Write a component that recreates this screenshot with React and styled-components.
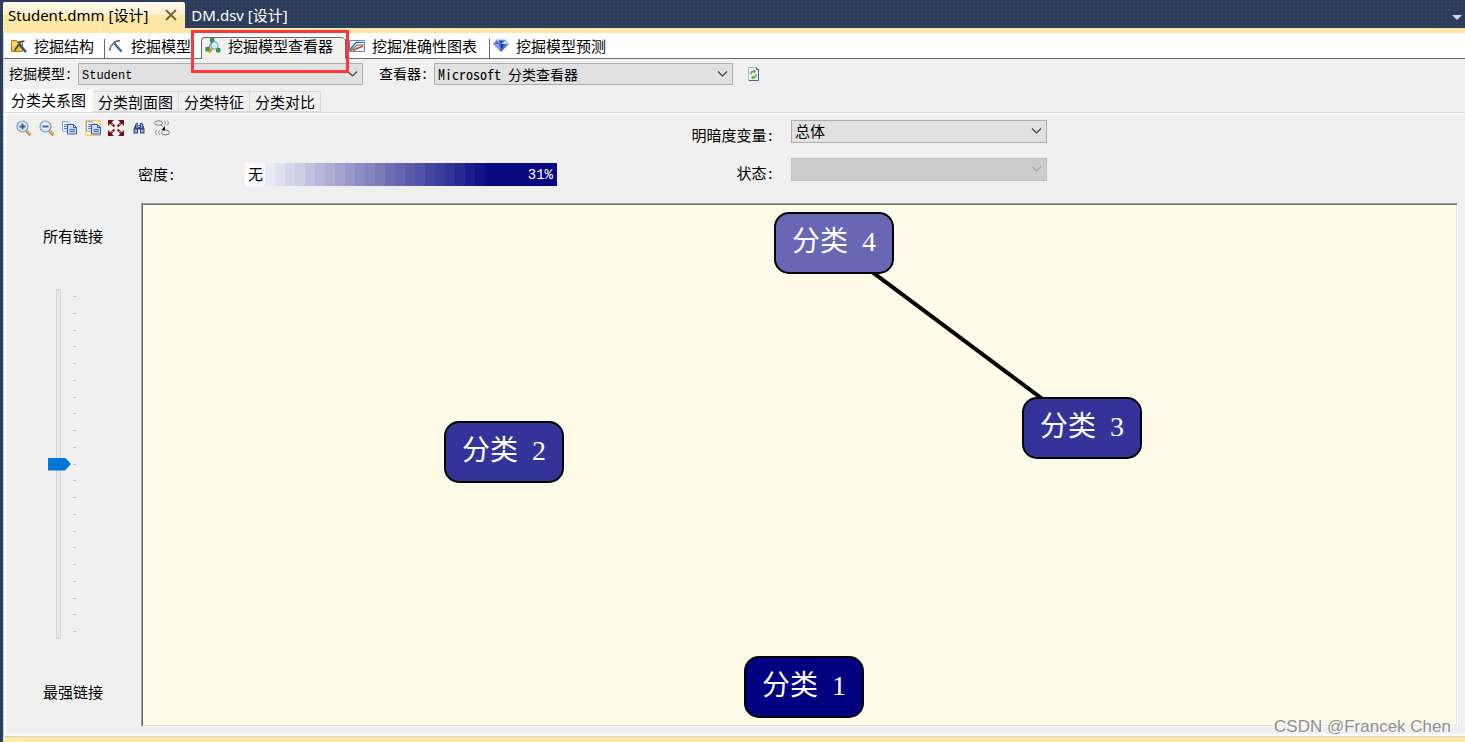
import React, { useState } from "react";
import styled, { createGlobalStyle, css } from "styled-components";

const UI = `"Noto Sans", "Noto Sans CJK SC", sans-serif`;
const SONG = `"Noto Sans Mono CJK SC", "Noto Sans CJK SC", sans-serif`;
const MONO = `"Liberation Mono", monospace`;

const GlobalStyle = createGlobalStyle`
  *, *::before, *::after { box-sizing: border-box; }
  body { margin: 0; background: #f0f0f0; color: #000; font: 300 15px/20px ${SONG}; }
  button, select, input { font: inherit; color: inherit; }
  svg { display: block; flex: none; }
`;

const Page = styled.div`
  position: relative;
  min-height: 100vh;
  display: flex;
  flex-direction: column;
  padding-left: 3px;
  background-color: #2b3c5a;
  background-image: radial-gradient(#32445f 1px, transparent 1px);
  background-size: 4px 4px;
`;

const DocumentBar = styled.div`
  display: flex;
  align-items: flex-end;
  height: 28px;
  padding-top: 2px;
  font: 400 15px/26px ${UI};
`;

const DocumentTab = styled.div`
  display: flex;
  align-items: center;
  height: 26px;
  padding: 0 6px;
  color: ${(p) => (p.$active ? "#000" : "#fff")};
  ${(p) =>
    p.$active &&
    css`
      padding: 0 8px 0 5px;
      border-radius: 2px 2px 0 0;
      background: linear-gradient(#fffcf3, #fff0c9 50%, #ffe8a6 52%, #ffe8a6);
    `}
`;

const PlainButton = styled.button`
  display: flex;
  align-items: center;
  justify-content: center;
  padding: 0;
  border: 0;
  background: none;
`;

const TabTitle = styled(PlainButton)`
  line-height: 26px;
  white-space: pre;
`;

const CloseButton = styled(PlainButton)`
  margin-left: 17px;
`;

const ListButton = styled(PlainButton)`
  width: 16px;
  height: 22px;
  margin-left: auto;
`;

const Designer = styled.main`
  flex: 1;
  display: flex;
  flex-direction: column;
  border-top: 5px solid #ffe8a6;
  border-bottom: 5px solid #ffe8a6;
  background: #f0f0f0;
`;

const ViewTabs = styled.nav`
  display: flex;
  align-items: flex-end;
  height: 26px;
  padding-left: 3px;
  border-left: 1px solid #ccd2de;
  border-bottom: 1px solid #696969;
  background: #fff;
`;

const ViewTab = styled.button`
  position: relative;
  display: flex;
  align-items: center;
  gap: 7px;
  height: 19px;
  padding: 0 ${(p) => (p.$wide ? 12 : 10)}px 6px 3px;
  border: 0;
  border-left: 1px solid ${(p) => (p.$first ? "transparent" : "#696969")};
  background: none;
  white-space: nowrap;
  ${(p) =>
    p.$active &&
    css`
      height: 22px;
      margin-bottom: -1px;
      border-top: 1px solid #696969;
      border-radius: 4px 4px 0 0;
      background: #f0f0f0;
    `}
`;

const Highlight = styled.span`
  position: absolute;
  z-index: 2;
  inset: -8px -4px -14px -11px;
  border: 3px solid #fb3838;
  pointer-events: none;
`;

const Label = styled.label`
  white-space: nowrap;
`;

const PickerRow = styled.div`
  display: flex;
  align-items: center;
  gap: 6px;
  height: 30px;
  padding-left: 5px;
  border-left: 1px solid #ccd2de;
  font-size: 14px;

  ${Label} { padding-bottom: 2px; }
  ${Label} + span + ${Label} { margin-left: 10px; }
`;

const SelectBox = styled.span`
  position: relative;
  display: flex;
  width: ${(p) => p.$width}px;
  height: ${(p) => p.$height || 22}px;

  svg {
    position: absolute;
    right: 5px;
    top: 7px;
    pointer-events: none;
  }
`;

const Select = styled.select`
  appearance: none;
  width: 100%;
  padding: 0 20px 2px 3px;
  border: 1px solid #adadad;
  border-radius: 0;
  background: #e1e1e1;
  ${(p) => p.$latin && css`font: 400 12px/20px ${MONO}; padding: 2px 20px 0 3px;`}

  &:disabled {
    border-color: #bfbfbf;
    background: #ccc;
    opacity: 1;
  }
`;

const RefreshButton = styled(PlainButton)`
  width: 22px;
  height: 22px;
  margin-left: 4px;
`;

const PageTabs = styled.nav`
  display: flex;
  align-items: flex-end;
  height: 23px;
  border-left: 1px solid #ccd2de;
`;

const PageTab = styled.button`
  height: 21px;
  padding: 0 5px;
  border: 1px solid #d9d9d9;
  border-left: 0;
  background: #f0f0f0;
  line-height: 19px;
  white-space: nowrap;
  ${(p) =>
    p.$active &&
    css`
      height: 23px;
      padding: 0 6px 4px 7px;
      border-color: #fff;
      background: #fff;
    `}
`;

const ViewerPage = styled.section`
  flex: 1;
  display: flex;
  flex-direction: column;
  border: 1px solid #ccd2de;
  border-right: 0;
  border-top-color: #d9d9d9;
  box-shadow: inset 3px 0 #fff, inset 0 1px #fff, inset 0 -2px #fff;
  padding: 1px 7px 9px 3px;
`;

const Controls = styled.div`
  display: flex;
  height: 89px;
`;

const ControlsLeft = styled.div`
  width: 684px;
  padding: 3px 0 0 5px;
`;

const Toolbar = styled.div`
  display: flex;
`;

const ToolButton = styled(PlainButton)`
  width: 23px;
  height: 22px;
`;

const DensityRow = styled.div`
  display: flex;
  align-items: center;
  margin-top: 24px;
  padding-left: 126px;
`;

const DensityLabel = styled.span`
  width: 107px;
  padding-bottom: 2px;
`;

const steps = Array.from({ length: 25 }, (_, i) => {
  const c = 255 - Math.round(i * 10.25);
  const b = 255 - Math.round(i * 5.2);
  const end = i === 24 ? "100%" : `${(i + 1) * 10}px`;
  return `rgb(${c},${c},${b}) ${i * 10}px ${end}`;
}).join(", ");

const DensityScale = styled.div`
  display: flex;
  align-items: center;
  justify-content: space-between;
  width: 312px;
  height: 23px;
  padding: 0 4px 2px 3px;
  background: linear-gradient(90deg, ${steps});
`;

const DensityMax = styled.span`
  padding-top: 2px;
  color: #fff;
  font: 400 14px/20px ${MONO};
`;

const ShadingForm = styled.form`
  display: grid;
  grid-template-columns: 83px 256px;
  grid-template-rows: 23px 23px;
  gap: 15px 17px;
  align-items: center;
  align-content: start;
  padding-top: 6px;

  label { padding-top: 7px; text-align: right; }
`;

const Body = styled.div`
  flex: 1;
  display: flex;
  min-height: 520px;
`;

const LinkPanel = styled.div`
  display: flex;
  flex-direction: column;
  gap: 43px;
  width: 134px;
  padding: 23px 0 25px 36px;
`;

const SliderRow = styled.div`
  flex: 1;
  display: flex;
  align-items: stretch;
  gap: 2px;
  padding-left: 5px;
`;

const LinkSlider = styled.input`
  appearance: none;
  writing-mode: vertical-lr;
  width: 23px;
  margin: 0;
  background: linear-gradient(#d6d6d6, #d6d6d6) 8px 0 / 1px 100% no-repeat,
    linear-gradient(#d6d6d6, #d6d6d6) 12px 0 / 1px 100% no-repeat,
    linear-gradient(#d6d6d6, #d6d6d6) 8px 0 / 5px 1px no-repeat,
    linear-gradient(#d6d6d6, #d6d6d6) 8px 100% / 5px 1px no-repeat,
    linear-gradient(#e7eaea, #e7eaea) 8px 0 / 5px 100% no-repeat;

  &::-webkit-slider-thumb {
    appearance: none;
    width: 23px;
    height: 13px;
    background: #0078d7;
    clip-path: polygon(0 0, 17px 0, 100% 50%, 17px 100%, 0 100%);
  }
`;

const Ticks = styled.div`
  display: flex;
  flex-direction: column;
  justify-content: space-between;
  padding: 7px 0;
`;

const Tick = styled.span`
  width: 3px;
  height: 1px;
  background: #c4c4c4;

  &:first-child, &:last-child { width: 4px; }
`;

const Canvas = styled.div`
  position: relative;
  flex: 1;
  overflow: hidden;
  border: 1px solid;
  border-color: #a0a0a0 #fff #fff #a0a0a0;
  background: #fffbe9;
  box-shadow: inset 1px 1px #696969, inset -1px -1px #e3e3e3;
`;

const Links = styled.svg`
  position: absolute;
  inset: 0;
  width: 100%;
  height: 100%;
`;

const Node = styled.button`
  position: absolute;
  left: ${(p) => p.$x}px;
  top: ${(p) => p.$y}px;
  width: 120px;
  height: 62px;
  padding: 0 0 6px;
  border: 2px solid #000;
  border-radius: 15px;
  background: ${(p) => p.$fill};
  color: #fff;
  font-size: 28px;
  line-height: 40px;
  white-space: nowrap;
`;

const NodeNumber = styled.span`
  font-family: "Liberation Serif", serif;
`;

const Watermark = styled.span`
  position: absolute;
  right: 14px;
  bottom: 5px;
  color: #8f8f8f;
  font: 400 17px/20px "Liberation Sans", sans-serif;
  text-shadow: 1px 1px #fff;
`;

const Icon = ({ children, size = 16 }) => (
  <svg width={size} height={size} viewBox="0 0 16 16" fill="none" aria-hidden="true">
    {children}
  </svg>
);

const StructureIcon = () => (
  <Icon>
    <path d="M.5 2.500h5l1 1.500h5v9.500H.5z" fill="#f3bf3f" stroke="#b57d16" />
    <path d="M1 5h10M1 7h4" stroke="#ffe79a" />
    <path d="M8 6 15 14" stroke="#24508f" strokeWidth="2.400" />
    <path d="M3.500 12.500 9 5" stroke="#3f4954" strokeWidth="1.700" />
    <path d="M6.500 4.500 13.500 3" stroke="#3f4954" strokeWidth="1.700" />
  </Icon>
);

const ModelIcon = () => (
  <Icon>
    <path d="M6.500 5.500 13.500 13.500" stroke="#24508f" strokeWidth="2.200" />
    <path d="M7 5.500 13 12.500" stroke="#6f9bd8" strokeWidth=".8" />
    <path d="M1.500 12.500C2 9.500 4 6.500 6 4.500L8 3.500 12 2.500" stroke="#4e5a68" strokeWidth="1.700" />
    <path d="M2.500 10.500C3 8 5 6 7 4.500" stroke="#c5cdd6" strokeWidth=".6" />
  </Icon>
);

const ViewerIcon = () => (
  <Icon>
    <path d="M7 3 3 11M8 3l5 9" stroke="#777" />
    <path d="M5.500 .5h3.500v3.500h-3.500zM.8 9.500h3.700V13H.8zM11.500 10.500h3.500V14h-3.500z" fill="#35a843" stroke="#16752a" strokeWidth=".7" />
    <circle cx="9.500" cy="7.500" r="3.700" fill="#c9ecfb" stroke="#6d97b8" />
    <path d="M8 6.500 9.500 5.500" stroke="#fff" strokeWidth="1.300" />
    <path d="M7 10.500 4 14.500" stroke="#d79330" strokeWidth="2.400" />
  </Icon>
);

const ChartIcon = () => (
  <Icon>
    <path d="M.5 2.500h15v11H.5z" fill="#eef4fc" stroke="#6d84ad" />
    <path d="M1 11.500 7 4.500h7.500" stroke="#2f59ae" strokeWidth="1.200" />
    <path d="m1.500 13 6.500-6h6.500" stroke="#2c9a4c" strokeWidth="1.200" />
    <path d="m4 12.500 4-2 6-2.500" stroke="#d63838" strokeWidth="1.400" />
  </Icon>
);

const DiamondIcon = () => (
  <Icon>
    <path d="M3.500 2h9L15.500 6 8 14 .5 6z" fill="#4b6fd0" stroke="#9faedd" />
    <path d="M3.500 2.500 8 6 5.500 2.500zM8 6l4.500-3.500L15 6z" fill="#c5d8ff" />
    <path d="M1 6h4.500L8 13z" fill="#86a6ef" />
    <path d="M8 6h3l-3 7z" fill="#24358f" />
    <path d="M6 3h4L8 6z" fill="#1d3fae" />
  </Icon>
);

const RefreshIcon = () => (
  <Icon>
    <path d="M2.500 1.500h8l2 2v11h-10z" fill="#eef4fd" stroke="#a3b3d2" />
    <path d="M10.500 1.500v2h2.500M3 14.500h9.500V4" stroke="#4c6290" />
    <path d="M5 8.500V7Q5 5.500 7.500 5.500h1M10 8v1.500q0 2-2.500 2h-1" stroke="#69a629" strokeWidth="1.400" />
    <path d="m7.500 3.300 2.800 2.200-2.800 2.200zM7.500 9.300l-2.800 2.200 2.800 2.200z" fill="#69a629" />
  </Icon>
);

const ZoomIcon = ({ plus }) => (
  <Icon>
    <path d="m10.500 11 4 4" stroke="#a6762b" strokeWidth="3" />
    <path d="m10.500 10.500 4 4" stroke="#f1c36c" strokeWidth="1.400" />
    <circle cx="6.500" cy="6.500" r="5.500" fill="#dcebfa" stroke="#8795a8" strokeWidth="1.200" />
    <path d={plus ? "M3.500 6.500h6M6.500 3.500v6" : "M3.500 6.500h6"} stroke="#315f98" strokeWidth="1.800" />
  </Icon>
);

const Sheets = () => (
  <>
    <path d="M.5 1.500h5.500l2.500 2.500v7h-8z" fill="#eef4ff" stroke="#88a4dc" />
    <path d="M2 4.500h4M2 6.500h4M2 8.500h4" stroke="#5c82cd" />
    <path d="M5.500 4.500h6l3 3v6.500h-9z" fill="#cfe0ff" stroke="#315bb0" />
    <path d="M11.500 4.500v3H15M7.500 9.500h5.500M7.500 11.500h5.500" stroke="#315bb0" />
  </>
);

const CopyIcon = () => <Icon><Sheets /></Icon>;

const CopyAllIcon = () => (
  <Icon>
    <path d="M.5.5h15v15H.5z" fill="#fff2a8" stroke="#f5b13c" strokeDasharray="2 1" />
    <g transform="translate(1 0)"><Sheets /></g>
  </Icon>
);

const FitIcon = () => (
  <Icon>
    <path d="M0 0h6L0 6zM16 0v6L10 0zM0 16v-6l6 6zM16 16h-6l6-6z" fill="#7d0b10" />
    <path d="M2.500 2.500 6.500 6.500M13.500 2.500 9.500 6.500M2.500 13.500 6.500 9.500M13.500 13.500 9.500 9.500" stroke="#7d0b10" strokeWidth="1.800" />
    <path d="M3.500 3.500 5 5M12.500 3.500 11 5M3.500 12.500 5 11M12.500 12.500 11 11" stroke="#f0f0f0" strokeWidth=".6" />
  </Icon>
);

const FindIcon = () => (
  <Icon>
    <path d="M5 3h2v2h2V3h2.500l2 6v4.500H9V9.500H7v4H2.500V9z" fill="#294c87" />
    <path d="M6 4v4M10.500 4v4M4 10h1.500v2H4zM10.500 10H12v2h-1.500z" stroke="#a9c3ea" />
    <path d="M7 6.500h2" stroke="#e7effa" />
  </Icon>
);

const LinksIcon = () => (
  <Icon>
    <ellipse cx="4.500" cy="3" rx="4" ry="2.200" fill="#e9eef6" stroke="#777" />
    <ellipse cx="11.500" cy="12.500" rx="4" ry="2.400" fill="#e9eef6" stroke="#777" />
    <path d="m7 5 3 3" stroke="#555" strokeDasharray="1 1" />
    <path d="M11 6v4H7.500z" fill="#000" />
    <path d="M10.500.5q2 2.500 0 5M13.500.5q2 2.500 0 5M2.500 10q-2 2.500 0 5M5.500 10q-2 2.500 0 5" stroke="#888" strokeWidth=".9" />
  </Icon>
);

const Chevron = ({ muted }) => (
  <svg width="11" height="8" viewBox="0 0 11 8" fill="none" aria-hidden="true">
    <path d="M1 1.500 5.500 6 10 1.500" stroke={muted ? "#a3a3a3" : "#404040"} strokeWidth="1.200" />
  </svg>
);

function Dropdown({ id, width, height, options = [], disabled, latin }) {
  return (
    <SelectBox $width={width} $height={height}>
      <Select id={id} disabled={disabled} $latin={latin}>
        {options.map((o) => <option key={o}>{o}</option>)}
      </Select>
      <Chevron muted={disabled} />
    </SelectBox>
  );
}

const VIEWS = [
  ["挖掘结构", StructureIcon],
  ["挖掘模型", ModelIcon],
  ["挖掘模型查看器", ViewerIcon],
  ["挖掘准确性图表", ChartIcon],
  ["挖掘模型预测", DiamondIcon],
];

const PAGES = ["分类关系图", "分类剖面图", "分类特征", "分类对比"];

const TOOLS = [
  ["放大", <ZoomIcon plus />],
  ["缩小", <ZoomIcon />],
  ["复制视图", <CopyIcon />],
  ["复制整个图形", <CopyAllIcon />],
  ["适合窗口", <FitIcon />],
  ["查找节点", <FindIcon />],
  ["改进布局", <LinksIcon />],
];

const NODES = [
  { n: 4, x: 632, y: 8, fill: "#6767b3" },
  { n: 3, x: 880, y: 193, fill: "#333399" },
  { n: 2, x: 302, y: 217, fill: "#333399" },
  { n: 1, x: 602, y: 452, fill: "#000080" },
];

export default function App() {
  const [strength, setStrength] = useState(10);
  return (
    <Page>
      <GlobalStyle />
      <DocumentBar>
        <DocumentTab $active>
          <TabTitle>Student.dmm [设计]</TabTitle>
          <CloseButton aria-label="关闭">
            <svg width="12" height="12" viewBox="0 0 12 12" aria-hidden="true">
              <path d="m1 1 10 10M11 1 1 11" stroke="#75633d" strokeWidth="1.800" />
            </svg>
          </CloseButton>
        </DocumentTab>
        <DocumentTab>
          <TabTitle>DM.dsv [设计]</TabTitle>
        </DocumentTab>
        <ListButton aria-label="窗口列表">
          <svg width="10" height="5" viewBox="0 0 10 5" aria-hidden="true">
            <path d="M0 0h10L5 5z" fill="#ced4e3" />
          </svg>
        </ListButton>
      </DocumentBar>

      <Designer>
        <ViewTabs>
          {VIEWS.map(([name, Glyph], i) => (
            <ViewTab key={name} $first={i === 0} $active={i === 2} $wide={i > 1}>
              <Glyph />
              {name}
              {i === 2 && <Highlight />}
            </ViewTab>
          ))}
        </ViewTabs>

        <PickerRow>
          <Label htmlFor="model">挖掘模型:</Label>
          <Dropdown id="model" width={285} options={["Student"]} latin />
          <Label htmlFor="viewer">查看器:</Label>
          <Dropdown id="viewer" width={299} options={["Microsoft 分类查看器"]} />
          <RefreshButton aria-label="刷新"><RefreshIcon /></RefreshButton>
        </PickerRow>

        <PageTabs>
          {PAGES.map((name, i) => (
            <PageTab key={name} $active={i === 0}>{name}</PageTab>
          ))}
        </PageTabs>

        <ViewerPage>
          <Controls>
            <ControlsLeft>
              <Toolbar>
                {TOOLS.map(([name, glyph]) => (
                  <ToolButton key={name} aria-label={name}>{glyph}</ToolButton>
                ))}
              </Toolbar>
              <DensityRow>
                <DensityLabel>密度:</DensityLabel>
                <DensityScale>
                  <span>无</span>
                  <DensityMax>31%</DensityMax>
                </DensityScale>
              </DensityRow>
            </ControlsLeft>
            <ShadingForm>
              <Label htmlFor="variable">明暗度变量:</Label>
              <Dropdown id="variable" width={256} height={23} options={["总体"]} />
              <Label htmlFor="state">状态:</Label>
              <Dropdown id="state" width={256} height={23} disabled />
            </ShadingForm>
          </Controls>

          <Body>
            <LinkPanel>
              <Label htmlFor="strength">所有链接</Label>
              <SliderRow>
                <LinkSlider
                  id="strength"
                  type="range"
                  min="0"
                  max="20"
                  value={strength}
                  onChange={(e) => setStrength(Number(e.target.value))}
                />
                <Ticks aria-hidden="true">
                  {Array.from({ length: 21 }, (_, i) => <Tick key={i} />)}
                </Ticks>
              </SliderRow>
              <Label htmlFor="strength">最强链接</Label>
            </LinkPanel>
            <Canvas>
              <Links aria-hidden="true">
                <line x1="690" y1="38" x2="938" y2="223" stroke="#000" strokeWidth="4" />
              </Links>
              {NODES.map((d) => (
                <Node key={d.n} $x={d.x} $y={d.y} $fill={d.fill}>
                  分类 <NodeNumber>{d.n}</NodeNumber>
                </Node>
              ))}
            </Canvas>
          </Body>
        </ViewerPage>
      </Designer>
      <Watermark>CSDN @Francek Chen</Watermark>
    </Page>
  );
}
